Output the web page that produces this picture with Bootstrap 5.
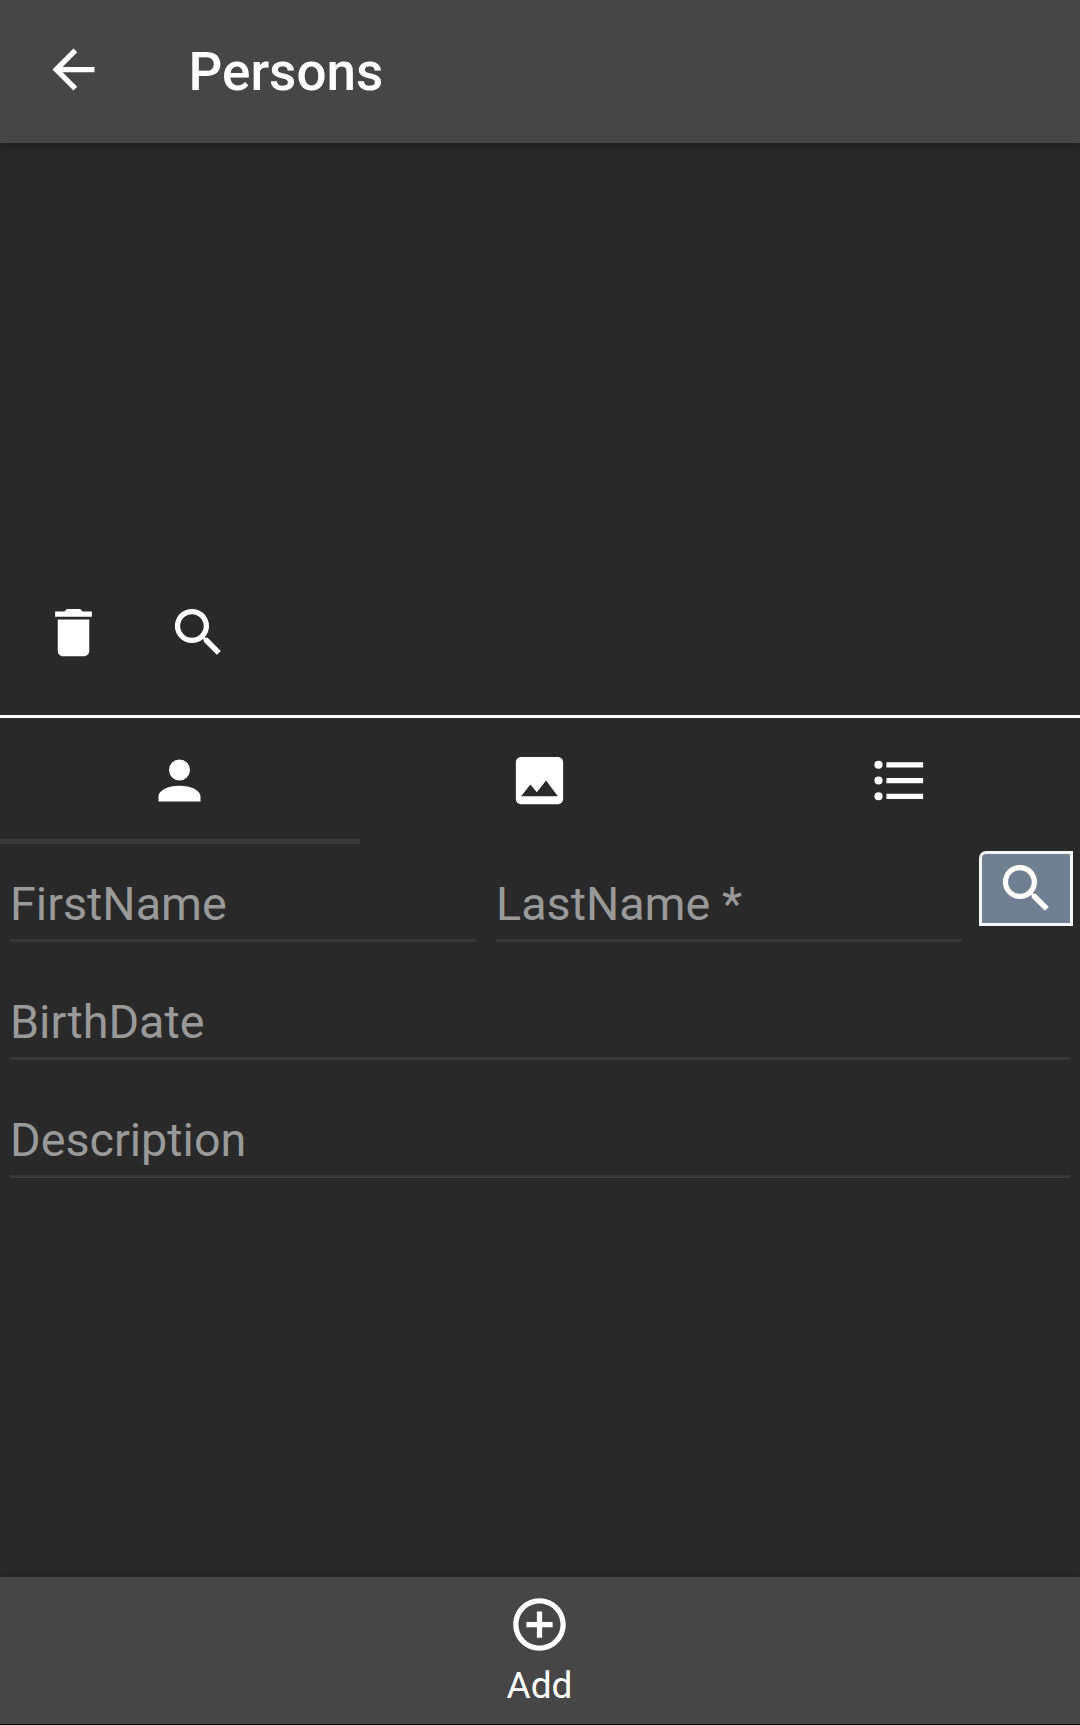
<!DOCTYPE html>
<html lang="en">
<head>
<meta charset="utf-8">
<meta name="viewport" content="width=device-width, initial-scale=1">
<title>Persons</title>
<link href="https://cdn.jsdelivr.net/npm/bootstrap@5.3.0/dist/css/bootstrap.min.css" rel="stylesheet">
<style>
  body { background: #292929; color: #fff; font-family: Roboto, sans-serif; height: 1725px; overflow: hidden; }
  .mdi { width: 63px; height: 63px; fill: #fff; display: block; flex: none; }
  .app-header { height: 143px; background: #464646; padding: 0 42px 4px 42px; box-shadow: 0 2px 12px rgba(0,0,0,.4); }
  .app-title { font-size: 53px; font-weight: 500; line-height: 62px; margin: 5px 0 0 83.5px; }
  .list-pane { height: 575px; border-bottom: 3px solid #fff; padding: 0 42px 51px 42px; gap: 62px; }
  .pane-tabs { height: 126px; }
  .pane-tabs .nav-link { height: 126px; padding: 31px 2px 0 0; border-bottom: 5px solid transparent; border-radius: 0; }
  .pane-tabs .nav-link.active { border-bottom-color: #393939; }
  .entry-row { height: 118px; padding: 0 10px; gap: 20px; }
  .entry { height: 98px; padding: 25px 0 0; border: 0; border-bottom: 3px solid #373737; border-radius: 0; background: transparent; font-size: 46.7px; line-height: 56px; color: #999; }
  .entry::placeholder { color: #999; opacity: 1; }
  .entry:focus { background: transparent; box-shadow: none; color: #fff; border-color: #708090; }
  .find-btn { width: 94px; height: 75px; margin: 7px -3px 0 -3px; padding: 0; background: #708090; border: 3px solid #f4f6f8; border-radius: 7px 0 0 0; }
  .app-footer { height: 148px; background: #464646; border-bottom: 1px solid #000; padding: 16px 1px 0 0; box-shadow: 0 0 8px rgba(0,0,0,.25); }
  .add-label { font-size: 37px; line-height: 44px; margin-top: 8px; }
</style>
</head>
<body class="d-flex flex-column">
<svg class="d-none">
  <symbol id="magnify" viewBox="0 0 24 24"><path d="M9.5,3A6.5,6.5 0 0,1 16,9.5C16,11.11 15.41,12.59 14.44,13.73L14.71,14H15.5L20.5,19L19,20.5L14,15.5V14.71L13.73,14.44C12.59,15.41 11.11,16 9.5,16A6.5,6.5 0 0,1 3,9.5A6.5,6.5 0 0,1 9.5,3M9.5,5C7,5 5,7 5,9.5C5,12 7,14 9.5,14C12,14 14,12 14,9.5C14,7 12,5 9.5,5Z"/></symbol>
</svg>

<header class="app-header d-flex align-items-center flex-shrink-0">
  <a href="#" aria-label="Back"><svg class="mdi" viewBox="0 0 24 24"><path d="M20 11H7.83l5.59-5.59L12 4l-8 8 8 8 1.41-1.41L7.83 13H20v-2z"/></svg></a>
  <h1 class="app-title">Persons</h1>
</header>

<section class="list-pane d-flex align-items-end flex-shrink-0">
  <a href="#" aria-label="Delete"><svg class="mdi" viewBox="0 0 24 24"><path d="M6 19c0 1.1.9 2 2 2h8c1.1 0 2-.9 2-2V7H6v12zM19 4h-3.5l-1-1h-5l-1 1H5v2h14V4z"/></svg></a>
  <a href="#" aria-label="Search"><svg class="mdi"><use href="#magnify"/></svg></a>
</section>

<nav class="pane-tabs nav nav-fill flex-shrink-0">
  <a class="nav-link active col-4 d-flex justify-content-center" href="#" aria-label="Person"><svg class="mdi" viewBox="0 0 24 24"><path d="M12,4A4,4 0 0,1 16,8A4,4 0 0,1 12,12A4,4 0 0,1 8,8A4,4 0 0,1 12,4M12,14C16.42,14 20,15.79 20,18V20H4V18C4,15.79 7.58,14 12,14Z"/></svg></a>
  <a class="nav-link col-4 d-flex justify-content-center" href="#" aria-label="Image"><svg class="mdi" viewBox="0 0 24 24"><path d="M21 19V5c0-1.1-.9-2-2-2H5c-1.1 0-2 .9-2 2v14c0 1.1.9 2 2 2h14c1.1 0 2-.9 2-2zM8.5 13.5l2.5 3.01L14.5 12l4.5 6H5l3.5-4.5z"/></svg></a>
  <a class="nav-link col-4 d-flex justify-content-center" href="#" aria-label="List"><svg class="mdi" viewBox="0 0 24 24"><circle cx="4" cy="6" r="1.55"/><circle cx="4" cy="12" r="1.55"/><circle cx="4" cy="18" r="1.55"/><path d="M7 5h14v2H7zM7 11h14v2H7zM7 17h14v2H7z"/></svg></a>
</nav>

<form class="flex-grow-1">
  <div class="entry-row d-flex align-items-start">
    <input class="form-control entry" placeholder="FirstName" aria-label="FirstName">
    <input class="form-control entry" placeholder="LastName *" aria-label="LastName">
    <button type="button" class="btn find-btn d-flex align-items-center justify-content-center flex-shrink-0" aria-label="Find"><svg class="mdi"><use href="#magnify"/></svg></button>
  </div>
  <div class="entry-row"><input class="form-control entry" placeholder="BirthDate" aria-label="BirthDate"></div>
  <div class="entry-row"><input class="form-control entry" placeholder="Description" aria-label="Description"></div>
</form>

<footer class="app-footer d-flex flex-column align-items-center flex-shrink-0">
  <svg class="mdi" viewBox="0 0 24 24"><path d="M12 2C6.48 2 2 6.48 2 12s4.48 10 10 10 10-4.48 10-10S17.52 2 12 2zm0 18c-4.41 0-8-3.59-8-8s3.59-8 8-8 8 3.59 8 8-3.590 8-8 8zM13 7h-2v4H7v2h4v4h2v-4h4v-2h-4z"/></svg>
  <span class="add-label">Add</span>
</footer>
<script src="https://cdn.jsdelivr.net/npm/bootstrap@5.3.0/dist/js/bootstrap.bundle.min.js"></script>
</body>
</html>
